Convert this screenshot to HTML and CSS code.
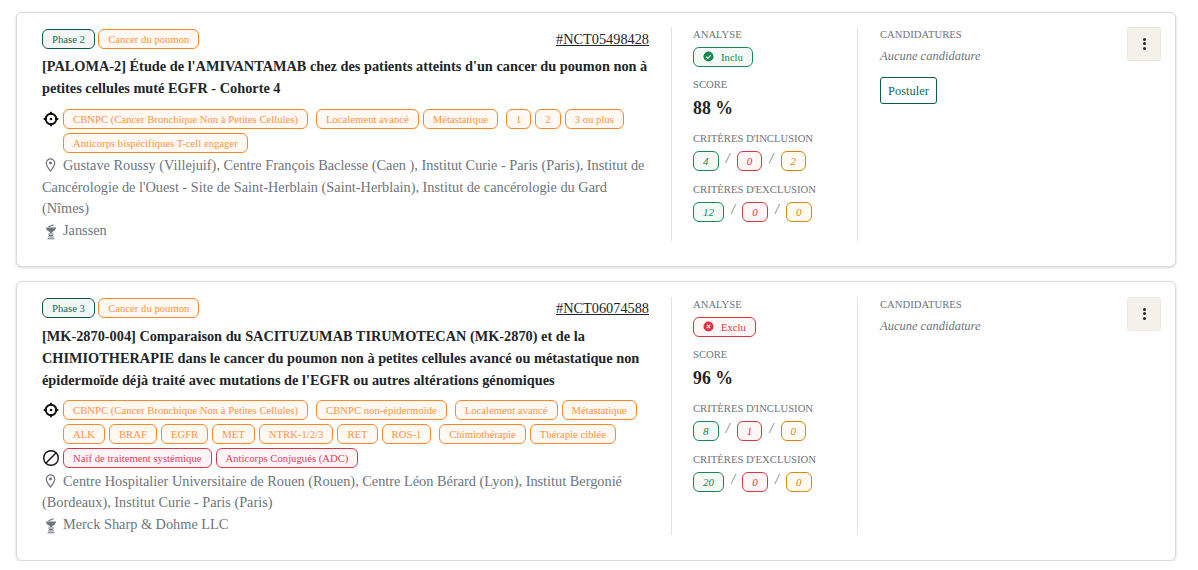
FILE: index.html
```html
<!DOCTYPE html>
<html lang="fr">
<head>
<meta charset="utf-8">
<title>Essais</title>
<link rel="stylesheet" href="styles.css">
</head>
<body>
<svg class="defs" width="0" height="0">
  <defs>
    <symbol id="target" viewBox="0 0 18 18"><circle cx="9" cy="9" r="5.300" fill="none" stroke="currentColor" stroke-width="1.900"/><circle cx="9" cy="9" r="1.300" fill="currentColor"/><path d="M9 1.700v3.300M9 13v3.300M1.700 9H5M13 9h3.300" stroke="currentColor" stroke-width="1.900" fill="none"/></symbol>
    <symbol id="pin" viewBox="0 0 12 16"><path d="M6 1a4.800 4.800 0 0 0-4.800 4.800C1.200 9.200 6 15 6 15s4.800-5.800 4.800-9.200A4.800 4.800 0 0 0 6 1z" fill="none" stroke="currentColor" stroke-width="1.400"/><circle cx="6" cy="5.800" r="1.700" fill="currentColor"/></symbol>
    <symbol id="bowl" viewBox="0 0 12 16"><path d="M1 3.600h10C10.800 6.200 8.800 7.600 7.200 7.900V9H4.800V7.900C3.200 7.600 1.200 6.200 1 3.600z" fill="currentColor"/><path d="M3.400 2.800 8.600.8" stroke="currentColor" stroke-width="1.100" fill="none"/><path d="M3.200 10h5.600M4 11.500h4M3.200 13h5.600M2.500 14.800h7" stroke="currentColor" stroke-width="1" fill="none"/></symbol>
    <symbol id="ban" viewBox="0 0 18 18"><circle cx="9" cy="9" r="7.300" fill="none" stroke="currentColor" stroke-width="1.400"/><path d="M3.800 14.200 14.200 3.800" stroke="currentColor" stroke-width="1.400" fill="none"/></symbol>
  </defs>
</svg>
<main class="list">
  <article class="card">
    <section class="main-col">
      <div class="head">
        <div class="chips"><span class="chip phase">Phase 2</span><span class="chip orange">Cancer du poumon</span></div>
        <a class="nct" href="#">#NCT05498428</a>
      </div>
      <h2 class="title">[PALOMA-2] Étude de l'AMIVANTAMAB chez des patients atteints d'un cancer du poumon non à petites cellules muté EGFR - Cohorte 4</h2>
      <div class="tag-row">
        <svg class="tag-icon"><use href="#target"/></svg>
        <div class="chips wrap">
          <span class="chip orange">CBNPC (Cancer Bronchique Non à Petites Cellules)</span><span class="chip orange group">Localement avancé</span><span class="chip orange">Métastatique</span><span class="chip orange group">1</span><span class="chip orange">2</span><span class="chip orange">3 ou plus</span><span class="chip orange">Anticorps bispécifiques T-cell engager</span>
        </div>
      </div>
      <p class="info"><svg class="info-icon"><use href="#pin"/></svg>Gustave Roussy (Villejuif), Centre François Baclesse (Caen ), Institut Curie - Paris (Paris), Institut de Cancérologie de l'Ouest - Site de Saint-Herblain (Saint-Herblain), Institut de cancérologie du Gard (Nîmes)</p>
      <p class="info"><svg class="info-icon tall"><use href="#bowl"/></svg>Janssen</p>
    </section>
    <section class="analysis-col">
      <h3 class="label">Analyse</h3>
      <span class="status ok"><svg class="status-icon" viewBox="0 0 12 12"><circle cx="6" cy="6" r="5.500" fill="currentColor"/><path d="M3.500 6.200 5.300 8l3.200-3.500" stroke="#fff" stroke-width="1.400" fill="none"/></svg>Inclu</span>
      <h3 class="label">Score</h3>
      <div class="score">88 %</div>
      <h3 class="label">Critères d'inclusion</h3>
      <div class="counts"><span class="count green">4</span><i>/</i><span class="count red">0</span><i>/</i><span class="count amber">2</span></div>
      <h3 class="label">Critères d'exclusion</h3>
      <div class="counts"><span class="count green">12</span><i>/</i><span class="count red">0</span><i>/</i><span class="count amber">0</span></div>
    </section>
    <section class="cand-col">
      <h3 class="label">Candidatures</h3>
      <p class="none">Aucune candidature</p>
      <button class="apply" type="button">Postuler</button>
    </section>
    <button class="menu" type="button" aria-label="Menu"><span></span><span></span><span></span></button>
  </article>

  <article class="card">
    <section class="main-col">
      <div class="head">
        <div class="chips"><span class="chip phase">Phase 3</span><span class="chip orange">Cancer du poumon</span></div>
        <a class="nct" href="#">#NCT06074588</a>
      </div>
      <h2 class="title">[MK-2870-004] Comparaison du SACITUZUMAB TIRUMOTECAN (MK-2870) et de la CHIMIOTHERAPIE dans le cancer du poumon non à petites cellules avancé ou métastatique non épidermoïde déjà traité avec mutations de l'EGFR ou autres altérations génomiques</h2>
      <div class="tag-row">
        <svg class="tag-icon"><use href="#target"/></svg>
        <div class="chips wrap">
          <span class="chip orange">CBNPC (Cancer Bronchique Non à Petites Cellules)</span><span class="chip orange group">CBNPC non-épidermoïde</span><span class="chip orange group">Localement avancé</span><span class="chip orange">Métastatique</span><span class="chip orange">ALK</span><span class="chip orange">BRAF</span><span class="chip orange">EGFR</span><span class="chip orange">MET</span><span class="chip orange">NTRK-1/2/3</span><span class="chip orange">RET</span><span class="chip orange">ROS-1</span><span class="chip orange group">Chimiothérapie</span><span class="chip orange">Thérapie ciblée</span>
        </div>
      </div>
      <div class="tag-row second">
        <svg class="tag-icon"><use href="#ban"/></svg>
        <div class="chips wrap"><span class="chip crimson">Naïf de traitement systémique</span><span class="chip crimson">Anticorps Conjugués (ADC)</span></div>
      </div>
      <p class="info"><svg class="info-icon"><use href="#pin"/></svg>Centre Hospitalier Universitaire de Rouen (Rouen), Centre Léon Bérard (Lyon), Institut Bergonié (Bordeaux), Institut Curie - Paris (Paris)</p>
      <p class="info"><svg class="info-icon tall"><use href="#bowl"/></svg>Merck Sharp &amp; Dohme LLC</p>
    </section>
    <section class="analysis-col">
      <h3 class="label">Analyse</h3>
      <span class="status ko"><svg class="status-icon" viewBox="0 0 12 12"><circle cx="6" cy="6" r="5.500" fill="currentColor"/><path d="M4.200 4.200l3.600 3.600M7.800 4.200 4.200 7.800" stroke="#fff" stroke-width="1.300" fill="none"/></svg>Exclu</span>
      <h3 class="label">Score</h3>
      <div class="score">96 %</div>
      <h3 class="label">Critères d'inclusion</h3>
      <div class="counts"><span class="count green">8</span><i>/</i><span class="count red">1</span><i>/</i><span class="count amber">0</span></div>
      <h3 class="label">Critères d'exclusion</h3>
      <div class="counts"><span class="count green">20</span><i>/</i><span class="count red">0</span><i>/</i><span class="count amber">0</span></div>
    </section>
    <section class="cand-col">
      <h3 class="label">Candidatures</h3>
      <p class="none">Aucune candidature</p>
    </section>
    <button class="menu" type="button" aria-label="Menu"><span></span><span></span><span></span></button>
  </article>
</main>
</body>
</html>
```

FILE: styles.css
```css
* { box-sizing: border-box; }
html, body { margin: 0; padding: 0; background: #fff; }
body { font-family: "Liberation Serif", "Times New Roman", serif; color: #212529; overflow: hidden; }
.defs { display: block; height: 0; }
.list { display: flex; flex-direction: column; gap: 14px; padding: 11.600px 22px 0 16px; }
.card { display: flex; align-items: stretch; border: 1px solid #dcdcdc; border-radius: 6px; padding: 14.400px 14px 25px 25px; box-shadow: 0 1px 3px rgba(0,0,0,.16); background: #fff; }
.main-col { width: 630px; flex: none; padding-right: 22px; border-right: 1px solid #e2e2e2; }
.head { display: flex; justify-content: space-between; align-items: flex-start; height: 20px; margin-top: 1.600px; }
.chips { display: flex; gap: 4px; }
.chips.wrap { flex-wrap: wrap; gap: 4px; }
.head .chips { gap: 3.200px; }
.group { margin-left: 4px; }
.chip { display: inline-flex; align-items: center; height: 20px; padding: 0 9px; font-size: 10.700px; border: 1px solid; border-radius: 6px; white-space: nowrap; }
.orange { color: #fd9543; border-color: #fa882b; background: #fff8f3; }
.crimson { color: #e2405c; border-color: #dc3545; background: #fff5f6; }
.phase { color: #0c6e5e; border-color: #0a5c4e; background: #f2f7f6; }
.nct { color: #212529; font-size: 14.320px; text-decoration: underline; line-height: 20px; }
.title { margin: 6.300px 0 0; font-size: 14.320px; line-height: 22px; font-weight: 700; color: #212529; }
.tag-row { display: flex; gap: 3px; margin-top: 9.800px; align-items: flex-start; }
.tag-row.second { margin-top: 4px; }
.tag-icon { flex: none; width: 18px; height: 18px; color: #111; margin-top: 1px; }
.tag-row + .info { margin-top: 2.500px; }
.info { margin: 0; font-size: 14.320px; line-height: 21.600px; color: #6c757d; }
.info:last-child { margin-bottom: -.3px; }
.info-icon { width: 11px; height: 14px; margin: 0 7px 0 3px; vertical-align: -2px; color: #6c757d; }
.info-icon.tall { width: 12px; height: 16px; margin: 0 6px 0 3px; vertical-align: -5px; }
.analysis-col { width: 186px; flex: none; padding-left: 21px; border-right: 1px solid #e2e2e2; }
.cand-col { flex: 1; padding-left: 22px; }
.label { margin: 0; font-size: 10.670px; line-height: 14px; font-weight: 400; text-transform: uppercase; color: #6c757d; }
.status { display: flex; align-items: center; width: fit-content; height: 20px; margin: 6px 0 10px; padding: 0 9px; font-size: 10.670px; border: 1px solid; border-radius: 6px; }
.status.ok { color: #198754; background: #f4f9f6; }
.status.ko { color: #dc3545; background: #fff6f7; }
.status-icon { width: 11px; height: 11px; margin-right: 7px; }
.score { font-size: 17.800px; font-weight: 700; line-height: 22px; margin: 6px 0 12px; }
.counts { display: flex; align-items: center; gap: 7.200px; margin: 6px 0 11px; }
.counts i { color: #6c757d; font-size: 14px; line-height: 16px; margin-top: -4px; }
.count { display: inline-flex; align-items: center; justify-content: center; height: 20px; padding: 0 9px; font-size: 11px; font-style: italic; border: 1px solid; border-radius: 6px; }
.green { color: #198754; background: #f4f9f6; }
.red { color: #dc3545; background: #fff6f7; }
.amber { color: #d68a00; background: #fffbf4; }
.none { margin: 7px 0 0; font-size: 12.500px; line-height: 16px; font-style: italic; color: #6c757d; }
.apply { display: block; margin-top: 13px; height: 27px; padding: 1.600px 7px 0; font: 12.500px "Liberation Serif", serif; color: #0c6e5e; background: #fff; border: 1px solid #0a5c4e; border-radius: 3px; }
.menu { flex: none; align-self: flex-start; display: flex; flex-direction: column; align-items: center; justify-content: center; gap: 1.500px; width: 34px; height: 34px; padding: 0; background: #f4f0ea; border: 1px solid #ece8e2; border-radius: 3px; }
.menu span { width: 3px; height: 3px; border-radius: 50%; background: #212529; }
```
